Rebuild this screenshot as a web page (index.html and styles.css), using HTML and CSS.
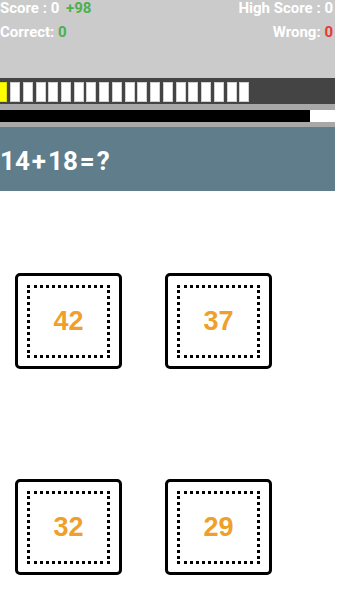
FILE: index.html
```html
<!DOCTYPE html>
<html lang="en">
    <head>
        <meta charset="UTF-8" />
        <meta name="viewport" content="width=device-width, initial-scale=1.0" />
        <title>Math Quiz</title>
        <link rel="stylesheet" href="styles.css">
    </head>
    <body>
        <div class="game">
            <div class="stats">
                <div class="stats-row">
                    <span>Score : 0 <span class="plus">+98</span></span>
                    <span>High Score : 0</span>
                </div>
                <div class="stats-row second">
                    <span>Correct: <span class="good">0</span></span>
                    <span>Wrong: <span class="bad">0</span></span>
                </div>
            </div>

            <div class="steps">
                <div class="step current"></div>
                <div class="step"></div>
                <div class="step"></div>
                <div class="step"></div>
                <div class="step"></div>
                <div class="step"></div>
                <div class="step"></div>
                <div class="step"></div>
                <div class="step"></div>
                <div class="step"></div>
                <div class="step"></div>
                <div class="step"></div>
                <div class="step"></div>
                <div class="step"></div>
                <div class="step"></div>
                <div class="step"></div>
                <div class="step"></div>
                <div class="step"></div>
                <div class="step"></div>
                <div class="step"></div>
            </div>

            <div class="timer">
                <div class="timer-track">
                    <div class="timer-fill" style="width: 310px"></div>
                </div>
            </div>

            <div class="question">14<span class="op">+</span>18<span class="op">=</span>?</div>

            <div class="answers">
                <div class="answer"><div class="answer-inner">42</div></div>
                <div class="answer"><div class="answer-inner">37</div></div>
                <div class="answer"><div class="answer-inner">32</div></div>
                <div class="answer"><div class="answer-inner">29</div></div>
            </div>
        </div>
    </body>
</html>
```

FILE: styles.css
```css
* {
    box-sizing: border-box;
}

body {
    margin: 0;
    background: #ffffff;
    font-family: Roboto, "Liberation Sans", sans-serif;
}

.game {
    width: 335px;
    overflow: hidden;
}

.stats {
    height: 78px;
    background: #cbcbcb;
    color: #ffffff;
    font-size: 15px;
    font-weight: bold;
    padding-right: 2px;
}

.stats-row {
    display: flex;
    justify-content: space-between;
    line-height: 17px;
}

.stats-row.second {
    margin-top: 7px;
}

.plus {
    margin-left: 3px;
    color: #4caf50;
}

.good {
    color: #4caf50;
}

.bad {
    color: #e53935;
}

.steps {
    height: 26px;
    background: #444444;
    display: flex;
    align-items: center;
    gap: 2.74px;
    margin-left: -2.7px;
    padding-top: 1px;
}

.step {
    flex: 0 0 10px;
    height: 20px;
    background: #ffffff;
    border: 1px solid #d0d0d0;
}

.step.current {
    background: #ffff00;
    border-color: #e0e000;
}

.timer {
    background: #a8a8a8;
    padding: 6px 0 5px;
}

.timer-track {
    height: 12px;
    background: #ffffff;
}

.timer-fill {
    height: 100%;
    background: #000000;
}

.question {
    height: 64px;
    background: #607d8b;
    color: #ffffff;
    font-size: 26px;
    font-weight: bold;
    display: flex;
    align-items: center;
    padding-top: 3px;
}

.op {
    margin: 0 2px;
}

.answers {
    display: grid;
    grid-template-columns: 107px 107px;
    column-gap: 43px;
    row-gap: 110px;
    padding: 82px 0 0 15px;
}

.answer {
    height: 96px;
    border: 3px solid #000000;
    border-radius: 5px;
    padding: 8.5px 9px;
}

.answer-inner {
    height: 100%;
    border: 3px dotted #000000;
    display: flex;
    justify-content: center;
    align-items: center;
    color: #efa02a;
    font-family: "Liberation Sans", Arial, sans-serif;
    font-size: 27px;
    font-weight: bold;
}
```
